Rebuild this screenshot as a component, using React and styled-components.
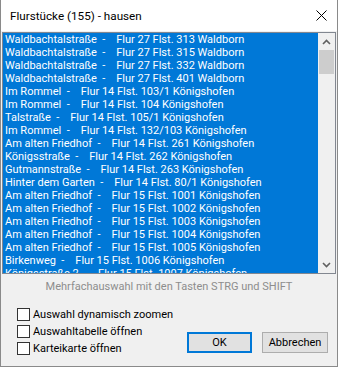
import React from "react";
import styled, { createGlobalStyle } from "styled-components";

const GlobalStyle = createGlobalStyle`
  html, body { margin: 0; padding: 0; background: #ffffff; }
  body { font-family: Roboto, "Noto Sans", sans-serif; }
`;

const Window = styled.div`
  width: 338px;
  height: 367px;
  box-sizing: border-box;
  border: 1px solid #8a8a8a;
  border-top: none;
  display: flex;
  flex-direction: column;
  background: #f0f0f0;
`;

const TitleBar = styled.div`
  height: 31px;
  flex: none;
  background: #ffffff;
  display: flex;
  align-items: center;
  justify-content: space-between;
  padding: 0 10px 0 9px;
  font-size: 11.7px;
  color: #000;
`;

const Title = styled.span`
  white-space: pre;
`;

const CloseBtn = styled.div`
  width: 11px;
  height: 11px;
  display: flex;
  svg { display: block; }
`;

const Client = styled.div`
  flex: 1;
  display: flex;
  flex-direction: column;
  padding: 1px 1px 0 1px;
  min-height: 0;
`;

const ListBox = styled.div`
  height: 242px;
  box-sizing: border-box;
  border: 1px solid #828790;
  display: flex;
  flex: none;
`;

const Rows = styled.div`
  flex: 1;
  background: #0078d7;
  overflow: hidden;
`;

const Row = styled.div`
  height: 13px;
  line-height: 13px;
  padding-left: 2px;
  font-size: 11px;
  color: #ffffff;
  white-space: pre;
`;

const ScrollBar = styled.div`
  width: 17px;
  background: #f0f0f0;
  display: flex;
  flex-direction: column;
`;

const ScrollArrow = styled.div`
  height: 17px;
  display: flex;
  align-items: center;
  justify-content: center;
  svg { display: block; }
`;

const Track = styled.div`
  flex: 1;
  padding: 0 1px;
`;

const Thumb = styled.div`
  height: 24px;
  background: #cdcdcd;
`;

const Hint = styled.div`
  margin-top: 5px;
  text-align: center;
  font-size: 11px;
  line-height: 16px;
  color: #8d8d8d;
  white-space: nowrap;
`;

const Bottom = styled.div`
  flex: 1;
  display: flex;
  align-items: flex-end;
  padding: 0 8px 11px 15px;
`;

const Checks = styled.div`
  flex: 1;
  display: flex;
  flex-direction: column;
  gap: 4px;
  white-space: nowrap;
`;

const CheckRow = styled.label`
  display: flex;
  align-items: center;
  gap: 3px;
  height: 13px;
  font-size: 11px;
  color: #000;
`;

const Box = styled.span`
  width: 13px;
  height: 13px;
  box-sizing: border-box;
  border: 1px solid #333333;
  background: #ffffff;
  flex: none;
`;

const Buttons = styled.div`
  display: flex;
  gap: 10px;
  margin-bottom: 2px;
`;

const Button = styled.div`
  width: ${(p) => p.$w}px;
  height: 21px;
  box-sizing: border-box;
  background: #e1e1e1;
  border: ${(p) => (p.$default ? "2px solid #0078d7" : "1px solid #adadad")};
  display: flex;
  align-items: center;
  justify-content: center;
  font-size: 11px;
  color: #000;
`;

const rows = [
  "Waldbachtalstraße  -    Flur 27 Flst. 313 Waldborn",
  "Waldbachtalstraße  -    Flur 27 Flst. 315 Waldborn",
  "Waldbachtalstraße  -    Flur 27 Flst. 332 Waldborn",
  "Waldbachtalstraße  -    Flur 27 Flst. 401 Waldborn",
  "Im Rommel  -    Flur 14 Flst. 103/1 Königshofen",
  "Im Rommel  -    Flur 14 Flst. 104 Königshofen",
  "Talstraße  -    Flur 14 Flst. 105/1 Königshofen",
  "Im Rommel  -    Flur 14 Flst. 132/103 Königshofen",
  "Am alten Friedhof  -    Flur 14 Flst. 261 Königshofen",
  "Königsstraße  -    Flur 14 Flst. 262 Königshofen",
  "Gutmannstraße  -    Flur 14 Flst. 263 Königshofen",
  "Hinter dem Garten  -    Flur 14 Flst. 80/1 Königshofen",
  "Am alten Friedhof  -    Flur 15 Flst. 1001 Königshofen",
  "Am alten Friedhof  -    Flur 15 Flst. 1002 Königshofen",
  "Am alten Friedhof  -    Flur 15 Flst. 1003 Königshofen",
  "Am alten Friedhof  -    Flur 15 Flst. 1004 Königshofen",
  "Am alten Friedhof  -    Flur 15 Flst. 1005 Königshofen",
  "Birkenweg  -    Flur 15 Flst. 1006 Königshofen",
  "Königsstraße 2  -    Flur 15 Flst. 1007 Königshofen",
];

const Chevron = ({ up }) => (
  <svg width="9" height="6" viewBox="0 0 9 6">
    <path
      d={up ? "M1 5 L4.5 1.5 L8 5" : "M1 1 L4.5 4.5 L8 1"}
      fill="none"
      stroke="#606060"
      strokeWidth="1.6"
    />
  </svg>
);

const App = () => {
  return (
    <>
      <GlobalStyle />
      <Window>
        <TitleBar>
          <Title>Flurstücke (155) - hausen</Title>
          <CloseBtn>
            <svg width="11" height="11" viewBox="0 0 11 11">
              <path d="M0.5 0.5 L10.5 10.5 M10.5 0.5 L0.5 10.5" stroke="#000" strokeWidth="1" />
            </svg>
          </CloseBtn>
        </TitleBar>
        <Client>
          <ListBox>
            <Rows>
              {rows.map((r, i) => (
                <Row key={i}>{r}</Row>
              ))}
            </Rows>
            <ScrollBar>
              <ScrollArrow><Chevron up /></ScrollArrow>
              <Track><Thumb /></Track>
              <ScrollArrow><Chevron /></ScrollArrow>
            </ScrollBar>
          </ListBox>
          <Hint>Mehrfachauswahl mit den Tasten STRG und SHIFT</Hint>
          <Bottom>
            <Checks>
              <CheckRow><Box />Auswahl dynamisch zoomen</CheckRow>
              <CheckRow><Box />Auswahltabelle öffnen</CheckRow>
              <CheckRow><Box />Karteikarte öffnen</CheckRow>
            </Checks>
            <Buttons>
              <Button $w={65} $default>OK</Button>
              <Button $w={66}>Abbrechen</Button>
            </Buttons>
          </Bottom>
        </Client>
      </Window>
    </>
  );
};

export default App;
